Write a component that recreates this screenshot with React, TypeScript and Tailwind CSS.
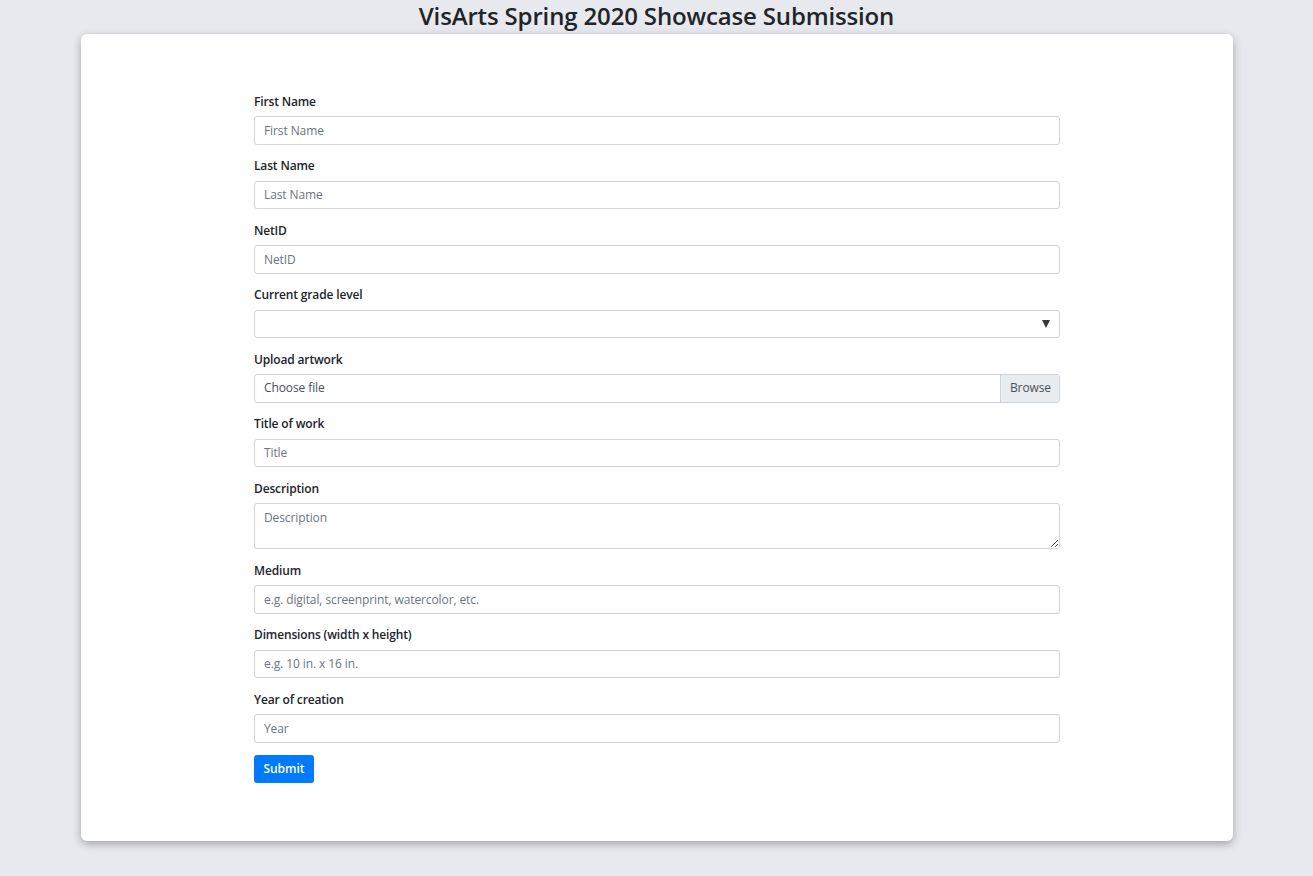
import React from "react";

const font = { fontFamily: '"Open Sans", "Liberation Sans", sans-serif' };

function Label({ children }: { children: React.ReactNode }) {
  return (
    <label className="block text-[12px] leading-[18px] font-semibold text-[#212529] mb-[5.5px] tracking-[-0.15px]">
      {children}
    </label>
  );
}

function Field({ label, placeholder }: { label: string; placeholder: string }) {
  return (
    <div className="mb-[12.5px]">
      <Label>{label}</Label>
      <input
        placeholder={placeholder}
        className="block w-full h-[28.5px] px-[9px] text-[12px] tracking-[-0.1px] text-[#495057] bg-white border border-[#ced4da] rounded-[3px] placeholder:text-[#6c757d] outline-none"
        style={font}
      />
    </div>
  );
}

export default function App() {
  return (
    <div className="min-h-[876px] bg-[#e8e9ee] pb-[35px]" style={font}>
      <h1 className="text-center text-[24px] leading-[32px] font-semibold text-[#212529] tracking-[-0.15px] -mb-[2px]">
        VisArts Spring 2020 Showcase Submission
      </h1>
      <div className="ml-[81px] w-[1152px] mt-[4px] bg-white rounded-[6px] shadow-[0_3px_8px_rgba(0,0,0,0.3)] pt-[58.5px] pb-[58px]">
        <form className="w-[806px] mx-auto" onSubmit={(e) => e.preventDefault()}>
          <Field label="First Name" placeholder="First Name" />
          <Field label="Last Name" placeholder="Last Name" />
          <Field label="NetID" placeholder="NetID" />
          <div className="mb-[12.5px]">
            <Label>Current grade level</Label>
            <div className="relative h-[28.5px] border border-[#ced4da] rounded-[3px] bg-white">
              <svg className="absolute right-[9px] top-[9px]" width="8" height="8" viewBox="0 0 8 8">
                <path d="M0 0 L8 0 L4 8 Z" fill="#343a40" />
              </svg>
            </div>
          </div>
          <div className="mb-[12.5px]">
            <Label>Upload artwork</Label>
            <div className="flex h-[28.5px] border border-[#ced4da] rounded-[3px] bg-white overflow-hidden">
              <div className="flex-1 flex items-center px-[9px] text-[12px] tracking-[-0.1px] text-[#495057]">Choose file</div>
              <div className="flex items-center pl-[9px] pr-[8px] text-[12px] tracking-[-0.1px] text-[#495057] bg-[#e9ecef] border-l border-[#ced4da]">Browse</div>
            </div>
          </div>
          <Field label="Title of work" placeholder="Title" />
          <div className="mb-[12.5px]">
            <Label>Description</Label>
            <textarea
              placeholder="Description"
              className="block w-full h-[46px] px-[9px] py-[5px] text-[12px] leading-[18px] tracking-[-0.1px] bg-white border border-[#ced4da] rounded-[3px] placeholder:text-[#6c757d] outline-none"
              style={font}
            />
          </div>
          <Field label="Medium" placeholder="e.g. digital, screenprint, watercolor, etc." />
          <Field label="Dimensions (width x height)" placeholder="e.g. 10 in. x 16 in." />
          <Field label="Year of creation" placeholder="Year" />
          <button
            type="submit"
            className="h-[28px] w-[60px] bg-[#007bff] text-white text-[12px] font-semibold rounded-[3px]"
            style={font}
          >
            Submit
          </button>
        </form>
      </div>
    </div>
  );
}
